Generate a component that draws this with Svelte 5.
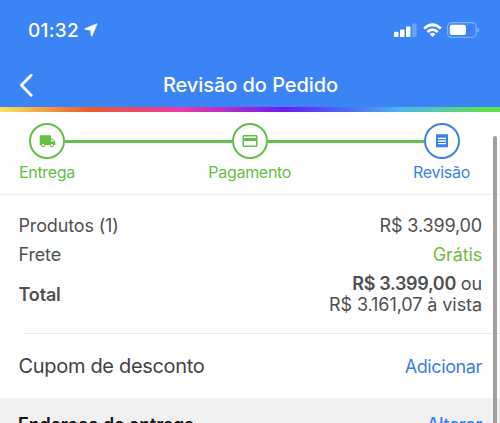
<script>
  const steps = [
    { label: 'Entrega', icon: 'truck' },
    { label: 'Pagamento', icon: 'card' },
    { label: 'Revisão', icon: 'receipt', current: true }
  ];
</script>

<div class="screen">
  <header>
    <div class="status">
      <div class="time">
        <span>01:32</span>
        <svg width="14" height="14" viewBox="0 0 14 14"><path d="M12.600.7 1 5.500q-1 .6.2 1l5.300.8.7 5.500q.4 1 1 0L13.100 1.100q.2-.7-.5-.4Z" fill="#fff" stroke="#fff" stroke-width=".5" /></svg>
      </div>
      <div class="indicators">
        <svg class="signal" width="23" height="16" viewBox="0 0 23 16" fill="#fff">
          <rect x="0" y="9.7" width="4.5" height="5.3" rx="1" />
          <rect x="6" y="7.5" width="4.5" height="7.5" rx="1" />
          <rect x="12" y="4.6" width="4.5" height="10.4" rx="1" />
          <rect x="18.2" y="1.6" width="4.5" height="13.4" rx="1" opacity=".25" />
        </svg>
        <svg class="wifi" width="19" height="15" viewBox="0 0 20 15" fill="none" stroke="#fff" stroke-width="2.8">
          <path d="M1.2 5.5Q10-2.6 18.8 5.5" />
          <path d="M4.6 9Q10 4 15.4 9" />
          <path d="m6.8 11.1 3.2 3.3 3.2-3.3Q10 8.6 6.8 11.1Z" fill="#fff" stroke="none" />
        </svg>
        <svg width="33" height="16" viewBox="0 0 33 16">
          <rect x=".6" y=".6" width="28.6" height="14.6" rx="4" fill="none" stroke="#fff" stroke-width="1.1" opacity=".4" />
          <rect x="2.7" y="2.7" width="16.3" height="10.4" rx="2" fill="#fff" />
          <path d="M30.6 5.4q3.2 2.500 0 5Z" fill="#fff" opacity=".45" />
        </svg>
      </div>
    </div>
    <nav>
      <svg width="16" height="24" viewBox="0 0 16 24"><path d="M13.200 2.300 3.400 12.200l9.800 10" fill="none" stroke="#fff" stroke-width="2.8" stroke-linecap="round" stroke-linejoin="round" /></svg>
      <h1>Revisão do Pedido</h1>
    </nav>
    <div class="rainbow"></div>
  </header>

  <section class="steps">
    {#each steps as step, i}
      {#if i}<div class="link" class:last={step.current}></div>{/if}
      <div class="step" class:current={step.current}>
        <div class="circle">
          {#if step.icon === 'truck'}
            <svg width="17" height="17" viewBox="0 0 24 24" fill="currentColor"><path d="M20 8h-3V3H3c-1.100 0-2 .9-2 2v12h2c0 1.660 1.340 3 3 3s3-1.340 3-3h6c0 1.660 1.340 3 3 3s3-1.340 3-3h2v-5l-3-4ZM6 18.500c-.83 0-1.500-.67-1.500-1.500s.67-1.500 1.500-1.500 1.500.67 1.500 1.500-.67 1.500-1.500 1.500Zm13.500-9 1.960 2.500H17V9.500h2.500Zm-1.500 9c-.83 0-1.500-.67-1.500-1.500s.67-1.500 1.500-1.500 1.500.67 1.500 1.500-.67 1.500-1.500 1.500Z" /></svg>
          {:else if step.icon === 'card'}
            <svg width="18" height="18" viewBox="0 0 24 24" fill="currentColor"><path d="M20 4H4c-1.110 0-1.990.89-1.990 2L2 18c0 1.110.89 2 2 2h16c1.110 0 2-.89 2-2V6c0-1.110-.89-2-2-2Zm0 14H4v-6h16v6Zm0-10H4V6h16v2Z" /></svg>
          {:else}
            <svg width="16" height="16" viewBox="0 0 24 24" fill="currentColor"><path d="M18 17H6v-2h12v2Zm0-4H6v-2h12v2Zm0-4H6V7h12v2ZM3 22l1.500-1.500L6 22l1.500-1.500L9 22l1.500-1.500L12 22l1.500-1.500L15 22l1.500-1.500L18 22l1.500-1.500L21 22V2H3v20Z" /></svg>
          {/if}
        </div>
        <span>{step.label}</span>
      </div>
    {/each}
  </section>

  <section class="summary">
    <div class="row"><span class="products">Produtos (1)</span><span class="price">R$ 3.399,00</span></div>
    <div class="row"><span>Frete</span><span class="free">Grátis</span></div>
    <div class="row total">
      <b>Total</b>
      <div class="amount"><div><b>R$ 3.399,00</b> ou</div><div class="cash">R$ 3.161,07 à vista</div></div>
    </div>
  </section>

  <section class="coupon"><span>Cupom de desconto</span><a href="#cupom">Adicionar</a></section>
  <section class="address"><b>Endereço de entrega</b><a href="#endereco">Alterar</a></section>
  <div class="scrollbar"></div>
</div>

<style>
  :global(body) { margin: 0; overflow: hidden; }
  .screen {
    position: relative; width: 500px; height: 423px; overflow: hidden;
    background: #fff; color: #505050; font-family: Inter, sans-serif;
  }
  .screen, .screen * { box-sizing: border-box; }
  svg { display: block; flex: none; }
  a { color: #397fe7; text-decoration: none; }
  b { font-weight: 600; }
  header { background: #3a84f5; color: #fff; height: 112px; display: flex; flex-direction: column; }
  .status { height: 62px; padding: 0 20px 2px 28px; display: flex; align-items: center; justify-content: space-between; }
  .time { display: flex; align-items: center; gap: 5px; font-size: 19px; font-weight: 500; letter-spacing: .3px; }
  .time span { width: 51px; white-space: nowrap; }
  .indicators { display: flex; align-items: center; gap: 5.500px; }
  nav { height: 45px; display: grid; grid-template-columns: 19px 1fr 19px; align-items: center; padding: 0 17px 0 18px; }
  h1 { margin: 0; text-align: center; font-size: 20px; line-height: 24px; font-weight: 500; letter-spacing: -.06px; }
  .rainbow { height: 5px; background: linear-gradient(90deg, #fbe45b, #e95b2d 18%, #ed3ba6 36%, #6c1cf0 57%, #4c69f4 69%, #50b5ee 80%, #63df50 97%); }
  .steps { height: 83px; padding: 11px 40.500px 0 29px; display: flex; align-items: flex-start; border-bottom: 1px solid #f0f0f0; }
  .step { width: 36px; display: flex; flex-direction: column; align-items: center; color: #63bf46; font-size: 16px; line-height: 20px; letter-spacing: -.3px; gap: 3px; }
  .step.current { color: #3b82e8; }
  .step span { white-space: nowrap; }
  .circle { width: 36px; height: 36px; border: 2px solid currentColor; border-radius: 50%; display: grid; place-items: center; }
  .link { flex: 167; height: 3px; margin-top: 17px; background: #63bf46; }
  .link.last { flex: 156; }
  .summary { height: 139px; margin-left: 25px; border-bottom: 1px solid #e9e9e9; padding: 17px 18px 0 0; font-size: 18px; letter-spacing: -.15px; }
  .row { display: flex; justify-content: space-between; margin-left: -6.500px; height: 29px; line-height: 28px; }
  .free { color: #70bd3b; }
  .total { height: 44px; align-items: center; line-height: 21px; margin-top: 2px; }
  .amount { text-align: right; }
  .amount b { letter-spacing: -.33px; }
  .cash { letter-spacing: -.08px; }
  .coupon { height: 64px; display: flex; justify-content: space-between; align-items: center; padding: 0 18px 0 18.500px; font-size: 20px; letter-spacing: -.32px; color: #424242; }
  .coupon a { font-size: 18px; letter-spacing: -.38px; }
  .address { height: 60px; display: flex; justify-content: space-between; align-items: flex-start; padding: 15px 18px 0; background: #f0f0f0; color: #151515; font-size: 18px; letter-spacing: -.23px; line-height: 24px; }
  .address a { font-weight: 500; letter-spacing: -.4px; }
  .scrollbar { position: absolute; top: 136px; left: 493px; width: 4px; height: 300px; border-radius: 2px; background: #a0a0a0; }
</style>
